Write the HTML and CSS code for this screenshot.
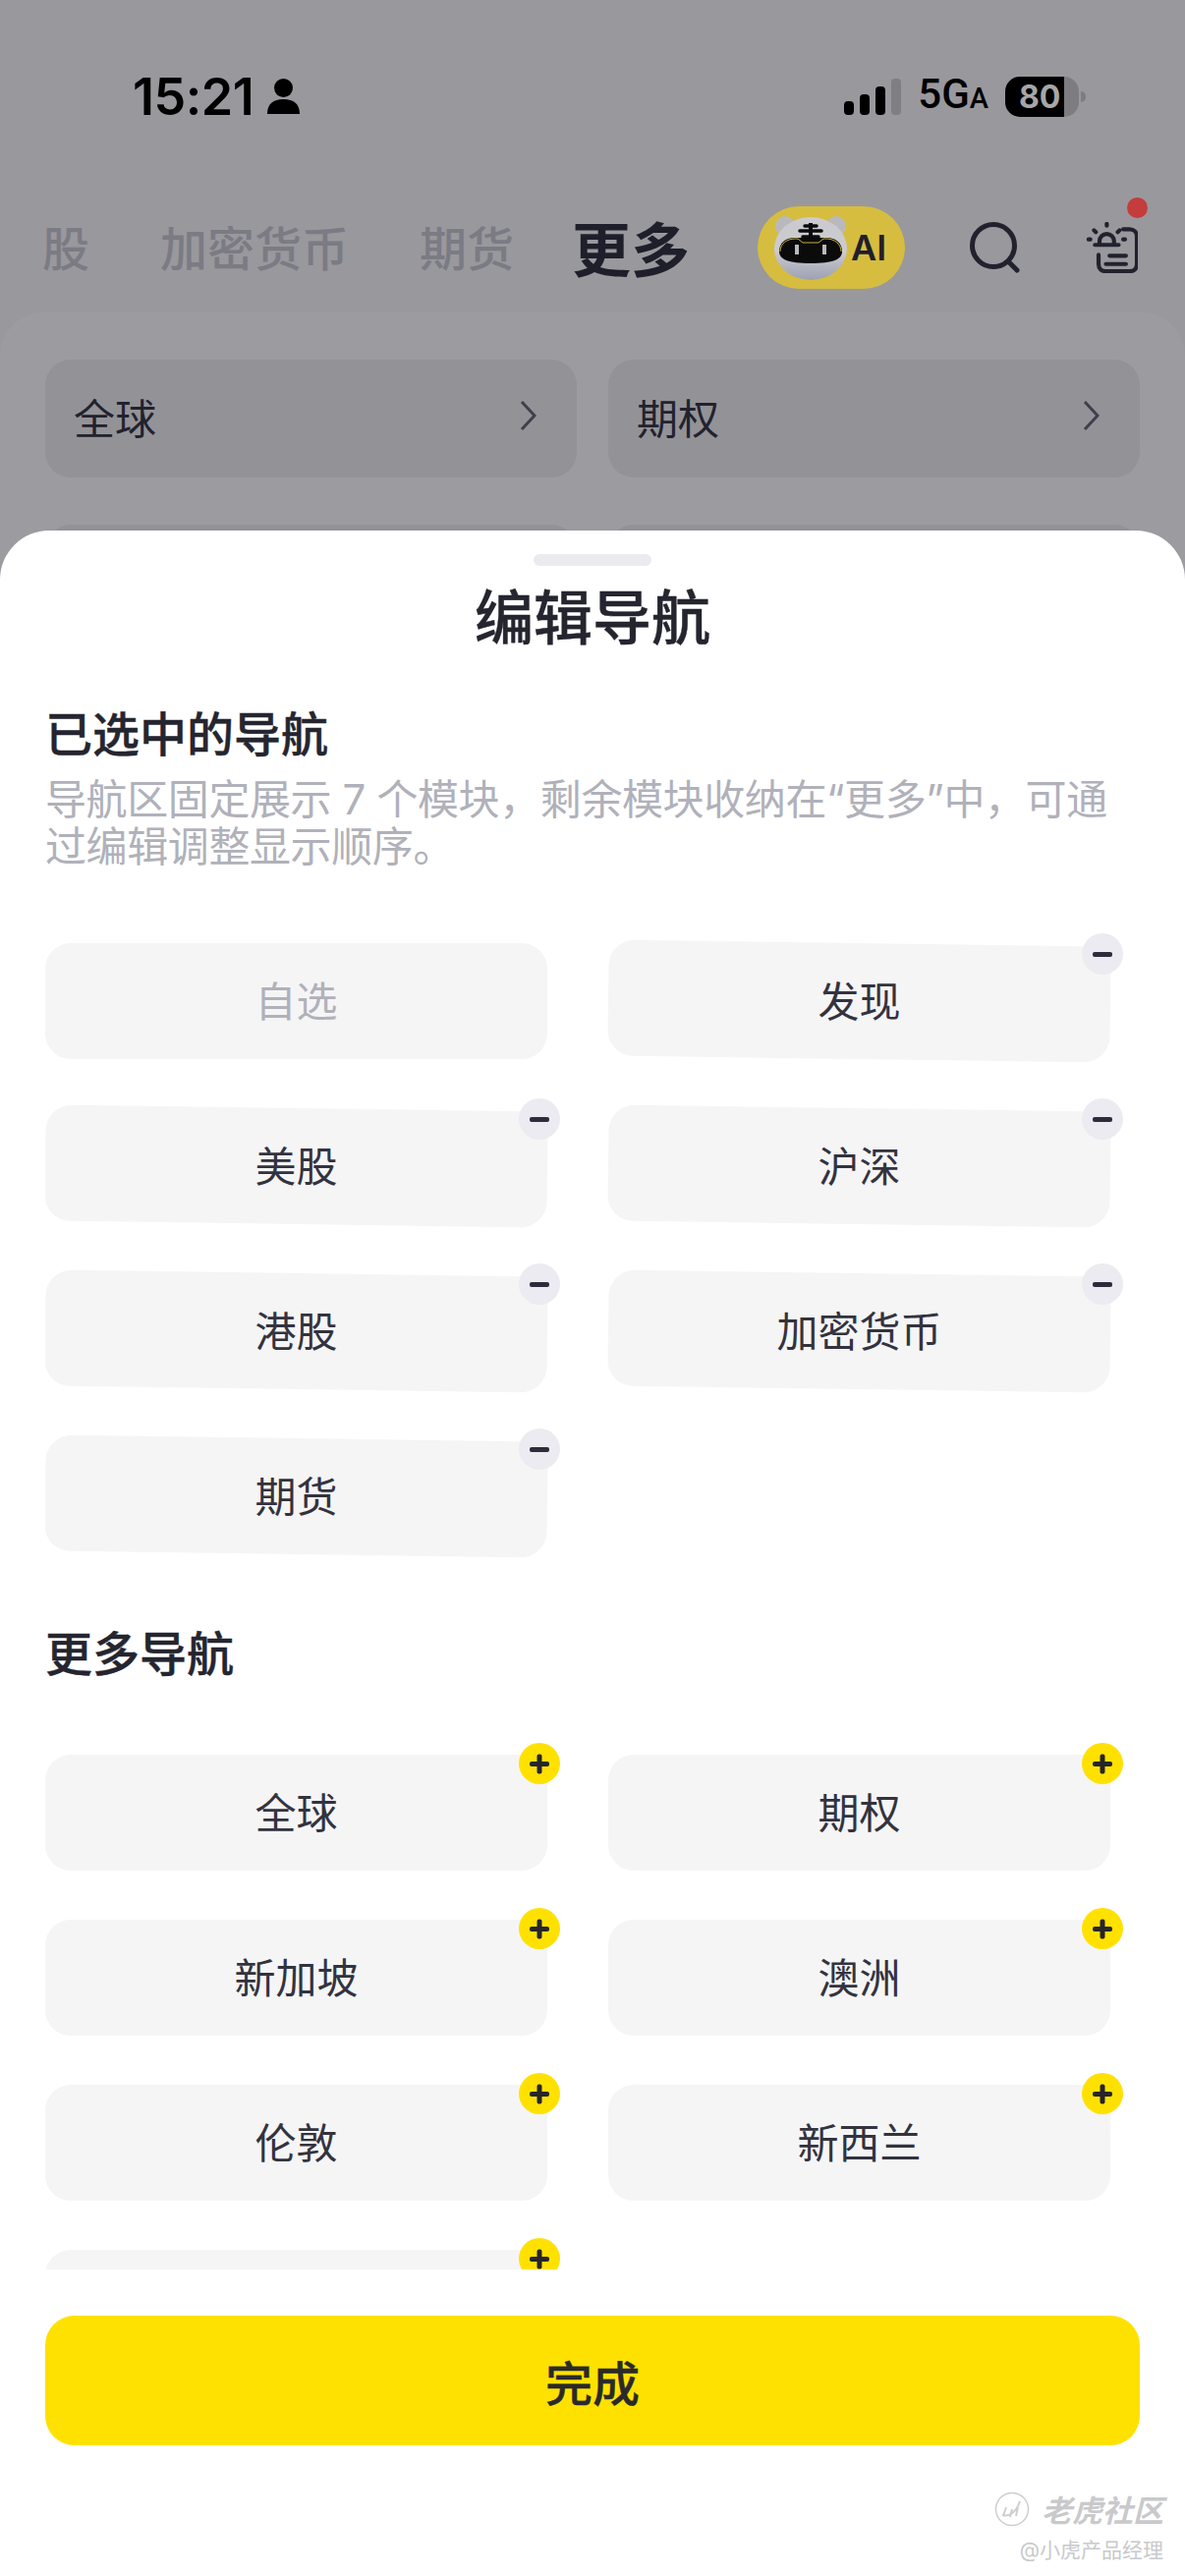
FILE: index.html
```html
<!DOCTYPE html>
<html lang="zh-CN">
<head>
  <meta charset="UTF-8" />
  <title>编辑导航</title>
  <meta name="viewport" content="width=device-width, initial-scale=1.0" />
  <link rel="stylesheet" href="styles.css">
</head>
<body>

  <div class="statusbar">
    <div class="status-left">
      <span class="time">15:21</span>
      <svg class="person" viewBox="0 0 33 36" width="33" height="36">
        <circle cx="16.5" cy="9.5" r="9.5" fill="#000" />
        <path d="M0 36c0-10 6-15 16.500-15S33 26 33 36z" fill="#000" />
      </svg>
    </div>
    <div class="status-right">
      <svg viewBox="0 0 58 37" width="58" height="37">
        <rect x="0" y="23" width="10" height="14" rx="4" fill="#000" />
        <rect x="16" y="16" width="10" height="21" rx="4" fill="#000" />
        <rect x="32" y="8" width="10" height="29" rx="4" fill="#000" />
        <rect x="48" y="0" width="10" height="37" rx="4" fill="#7f7f83" />
      </svg>
      <span class="network">5G<small>A</small></span>
      <div class="battery">
        <span class="battery-level">80</span>
        <i class="battery-nub"></i>
      </div>
    </div>
  </div>

  <nav class="topnav">
    <span class="tab tab-first">股</span>
    <span class="tab">加密货币</span>
    <span class="tab">期货</span>
    <span class="tab-active">更多</span>
    <div class="ai-pill">
      <svg viewBox="0 0 74 66" width="74" height="66">
        <defs>
          <linearGradient id="headShade" x1="0" y1="0" x2="0" y2="1">
            <stop offset="0.55" stop-color="#cbcbcf" />
            <stop offset="1" stop-color="#9ca1b3" />
          </linearGradient>
        </defs>
        <circle cx="11" cy="11" r="10" fill="#b9b9bd" />
        <circle cx="63" cy="11" r="10" fill="#b9b9bd" />
        <ellipse cx="37" cy="34" rx="37" ry="32" fill="url(#headShade)" />
        <path d="M5 37c0-9 7-14 15-14h34c8 0 15 5 15 14 0 8-9 12-32 12S5 45 5 37z" fill="#0b0b0b" />
        <path d="M6 37c0-8 7-13 15-13h3l5 4h16l5-4h3c8 0 15 5 15 13" fill="none" stroke="#c9b230" stroke-width="1" />
        <rect x="21" y="30" width="4" height="10" fill="#b9b9bd" />
        <rect x="49" y="30" width="4" height="10" fill="#b9b9bd" />
        <path d="M37 8v18" stroke="#0b0b0b" stroke-width="4" />
        <path d="M31 11h12M26 16h22M29 22h16" stroke="#0b0b0b" stroke-width="3.500" stroke-linecap="round" />
      </svg>
      <span>AI</span>
    </div>
    <svg class="search" viewBox="0 0 52 52" width="52" height="52">
      <circle cx="24" cy="24" r="21.500" fill="none" stroke="#22222e" stroke-width="5" />
      <path d="M39 40l9 9" stroke="#22222e" stroke-width="5" stroke-linecap="round" />
    </svg>
    <div class="alert">
      <svg viewBox="0 0 57 56" width="53" height="52">
        <g fill="none" stroke="#22222e" stroke-width="4.500" stroke-linecap="round">
          <path d="M41 8h7c5 0 8 3 8 8v30c0 5-3 8-8 8H22c-5 0-8-3-8-8V36" />
          <path d="M26 37h18M22 46h22" />
          <path d="M10 25h26M15 24v-3a8 8 0 0 1 16 0v3" />
          <path d="M23 2v2M9 9l2 2M37 9l-2 2M3 19h2M43 19h-2" />
        </g>
      </svg>
      <i class="alert-dot"></i>
    </div>
  </nav>

  <div class="market-card">
    <div class="market-item">全球
      <svg viewBox="0 0 17 30" width="17" height="30"><path d="M2 1l13 14L2 29" fill="none" stroke="#3f3f4c" stroke-width="3" /></svg>
    </div>
    <div class="market-item">期权
      <svg viewBox="0 0 17 30" width="17" height="30"><path d="M2 1l13 14L2 29" fill="none" stroke="#3f3f4c" stroke-width="3" /></svg>
    </div>
    <div class="market-item"></div>
    <div class="market-item"></div>
  </div>

  <div class="sheet">
    <div class="sheet-scroll">
      <div class="grabber"></div>
      <h1>编辑导航</h1>

      <h2>已选中的导航</h2>
      <p class="hint">导航区固定展示 7 个模块，剩余模块收纳在“更多”中，可通过编辑调整显示顺序。</p>

      <div class="tile-grid selected">
        <div class="tile locked"><span>自选</span></div>
        <div class="tile wobble"><span>发现</span><i class="badge minus"></i></div>
        <div class="tile wobble"><span>美股</span><i class="badge minus"></i></div>
        <div class="tile wobble"><span>沪深</span><i class="badge minus"></i></div>
        <div class="tile wobble"><span>港股</span><i class="badge minus"></i></div>
        <div class="tile wobble"><span>加密货币</span><i class="badge minus"></i></div>
        <div class="tile wobble"><span>期货</span><i class="badge minus"></i></div>
      </div>

      <h2 class="more-title">更多导航</h2>

      <div class="tile-grid others">
        <div class="tile"><span>全球</span><i class="badge plus"></i></div>
        <div class="tile"><span>期权</span><i class="badge plus"></i></div>
        <div class="tile"><span>新加坡</span><i class="badge plus"></i></div>
        <div class="tile"><span>澳洲</span><i class="badge plus"></i></div>
        <div class="tile"><span>伦敦</span><i class="badge plus"></i></div>
        <div class="tile"><span>新西兰</span><i class="badge plus"></i></div>
        <div class="tile"><i class="badge plus"></i></div>
      </div>
    </div>

    <button class="done" type="button">完成</button>
  </div>

  <div class="watermark">
    <div class="wm-brand">
      <svg viewBox="0 0 36 36" width="36" height="36">
        <circle cx="18" cy="18" r="16.500" fill="none" stroke="#cfcfd2" stroke-width="1.500" />
        <path d="M8 24c6 2 14-2 18-14M12 16l-3 9M18 18l-2 8M24 16l-2 9" fill="none" stroke="#cfcfd2" stroke-width="2" />
      </svg>
      <span>老虎社区</span>
    </div>
    <div class="wm-user">@小虎产品经理</div>
  </div>

</body>
</html>
```

FILE: styles.css
```css
html, body {
  margin: 0;
  padding: 0;
}

body {
  position: relative;
  width: 1206px;
  height: 2622px;
  overflow: hidden;
  background: #99989d;
  color: #25252f;
  font-family: "Inter", "Noto Sans CJK SC", sans-serif;
}

/* status bar */
.statusbar {
  display: flex;
  justify-content: space-between;
  align-items: center;
  height: 76px;
  padding: 60px 101px 0 135px;
}

.status-left {
  display: flex;
  align-items: center;
  gap: 14px;
}

.time {
  font-size: 52px;
  font-weight: 600;
  letter-spacing: -0.5px;
  color: #000;
}

.status-right {
  display: flex;
  align-items: center;
  gap: 17px;
}

.network {
  font-family: "Roboto", sans-serif;
  font-size: 42px;
  font-weight: 500;
  line-height: 42px;
  color: #000;
}

.network small {
  font-size: 29px;
}

.battery {
  position: relative;
  width: 75px;
  height: 41px;
  border-radius: 15px;
  background: linear-gradient(to right, #000 60px, #7d7d81 60px);
  margin-right: 7px;
}

.battery-level {
  display: block;
  width: 60px;
  padding-left: 14px;
  box-sizing: border-box;
  font-size: 32px;
  font-weight: 700;
  line-height: 41px;
  color: #a6a6a9;
}

.battery-nub {
  position: absolute;
  top: 15px;
  right: -7px;
  width: 5px;
  height: 11px;
  border-radius: 0 6px 6px 0;
  background: #7d7d81;
}

/* top tabs */
.topnav {
  display: flex;
  align-items: center;
  height: 84px;
  margin-top: 74px;
  padding-left: 43px;
}

.tab {
  margin-bottom: 4px;
  margin-right: 72px;
  font-size: 48px;
  font-weight: 500;
  color: #7b7b84;
}

.tab-active {
  margin-bottom: 4px;
  margin-left: -13px;
  font-size: 60px;
  font-weight: 700;
  color: #1f1f2b;
}

.ai-pill {
  display: flex;
  align-items: center;
  width: 150px;
  height: 84px;
  margin-left: 69px;
  padding-left: 17px;
  box-sizing: border-box;
  border-radius: 42px;
  background: #d6bd3f;
}

.ai-pill span {
  margin-left: 4px;
  font-size: 36px;
  font-weight: 600;
  color: #1f1f2b;
}

.search {
  margin-left: 66px;
}

.alert {
  position: relative;
  margin-left: 66px;
  height: 52px;
}

.alert-dot {
  position: absolute;
  top: -25px;
  right: -10px;
  width: 21px;
  height: 21px;
  border-radius: 50%;
  background: #c43c3c;
}

/* list behind the sheet */
.market-card {
  display: grid;
  grid-template-columns: 541px 541px;
  gap: 48px 32px;
  margin-top: 24px;
  padding: 48px 46px;
  border-radius: 44px 44px 0 0;
  background: #9c9ba0;
}

.market-item {
  display: flex;
  justify-content: space-between;
  align-items: center;
  height: 120px;
  padding: 0 41px 6px 29px;
  box-sizing: border-box;
  border-radius: 26px;
  background: #939297;
  font-size: 42px;
  color: #22222e;
}

/* bottom sheet */
.sheet {
  position: absolute;
  top: 540px;
  left: 0;
  width: 1206px;
  height: 2082px;
  padding: 0 46px;
  box-sizing: border-box;
  border-radius: 50px 50px 0 0;
  background: #fff;
}

.sheet-scroll {
  height: 1770px;
  overflow: hidden;
}

.grabber {
  width: 120px;
  height: 12px;
  margin: 24px auto 0;
  border-radius: 6px;
  background: #ebebef;
}

h1 {
  margin: 18px 0 0;
  font-size: 60px;
  font-weight: 500;
  line-height: 70px;
  text-align: center;
  -webkit-text-stroke: 0.4px #25252f;
}

h2 {
  margin: 54px 0 0;
  font-size: 48px;
  font-weight: 500;
  line-height: 60px;
  -webkit-text-stroke: 0.4px #25252f;
}

.hint {
  margin: 12px 0 0;
  font-size: 42px;
  letter-spacing: -0.4px;
  line-height: 48px;
  color: #b0b1ba;
}

.more-title {
  margin-top: 72px;
}

.tile-grid {
  display: grid;
  grid-template-columns: 511px 511px;
  grid-auto-rows: 118px;
  gap: 50px 62px;
}

.selected {
  margin-top: 74px;
}

.others {
  margin-top: 72px;
}

.tile {
  position: relative;
  display: flex;
  justify-content: center;
  align-items: center;
  padding-bottom: 6px;
  box-sizing: border-box;
  border-radius: 26px;
  font-size: 42px;
  color: #33333f;
}

.tile::before {
  content: "";
  position: absolute;
  inset: 0;
  border-radius: 26px;
  background: #f5f5f6;
}

.tile span {
  position: relative;
}

.wobble::before {
  transform: rotate(0.8deg);
}

.locked span {
  color: #b0b1ba;
}

.badge {
  position: absolute;
  top: -10px;
  right: -13px;
  width: 42px;
  height: 42px;
  border-radius: 50%;
}

.badge::before,
.plus::after {
  content: "";
  position: absolute;
  top: 18.500px;
  left: 11px;
  width: 20px;
  height: 5px;
  border-radius: 2px;
  background: #2c2c3c;
}

.minus {
  background: #ebebf1;
}

.plus {
  top: -12px;
  background: #ffe100;
}

.plus::before {
  background: #26262a;
}

.plus::after {
  background: #26262a;
  transform: rotate(90deg);
}

.done {
  display: block;
  width: 1114px;
  height: 132px;
  margin-top: 47px;
  padding: 0;
  border: none;
  border-radius: 30px;
  background: #ffe100;
  color: #2a2a2a;
  font-family: inherit;
  font-size: 48px;
  font-weight: 500;
  -webkit-text-stroke: 0.4px #2a2a2a;
}

/* forum stamp in the corner */
.watermark {
  position: absolute;
  right: 22px;
  bottom: 13px;
  text-align: right;
  color: #c9c9cc;
}

.wm-brand {
  display: flex;
  align-items: center;
  justify-content: flex-end;
  gap: 12px;
  font-size: 31px;
  font-weight: 700;
  font-style: italic;
}

.wm-user {
  margin-top: 3px;
  font-size: 21px;
}
```
